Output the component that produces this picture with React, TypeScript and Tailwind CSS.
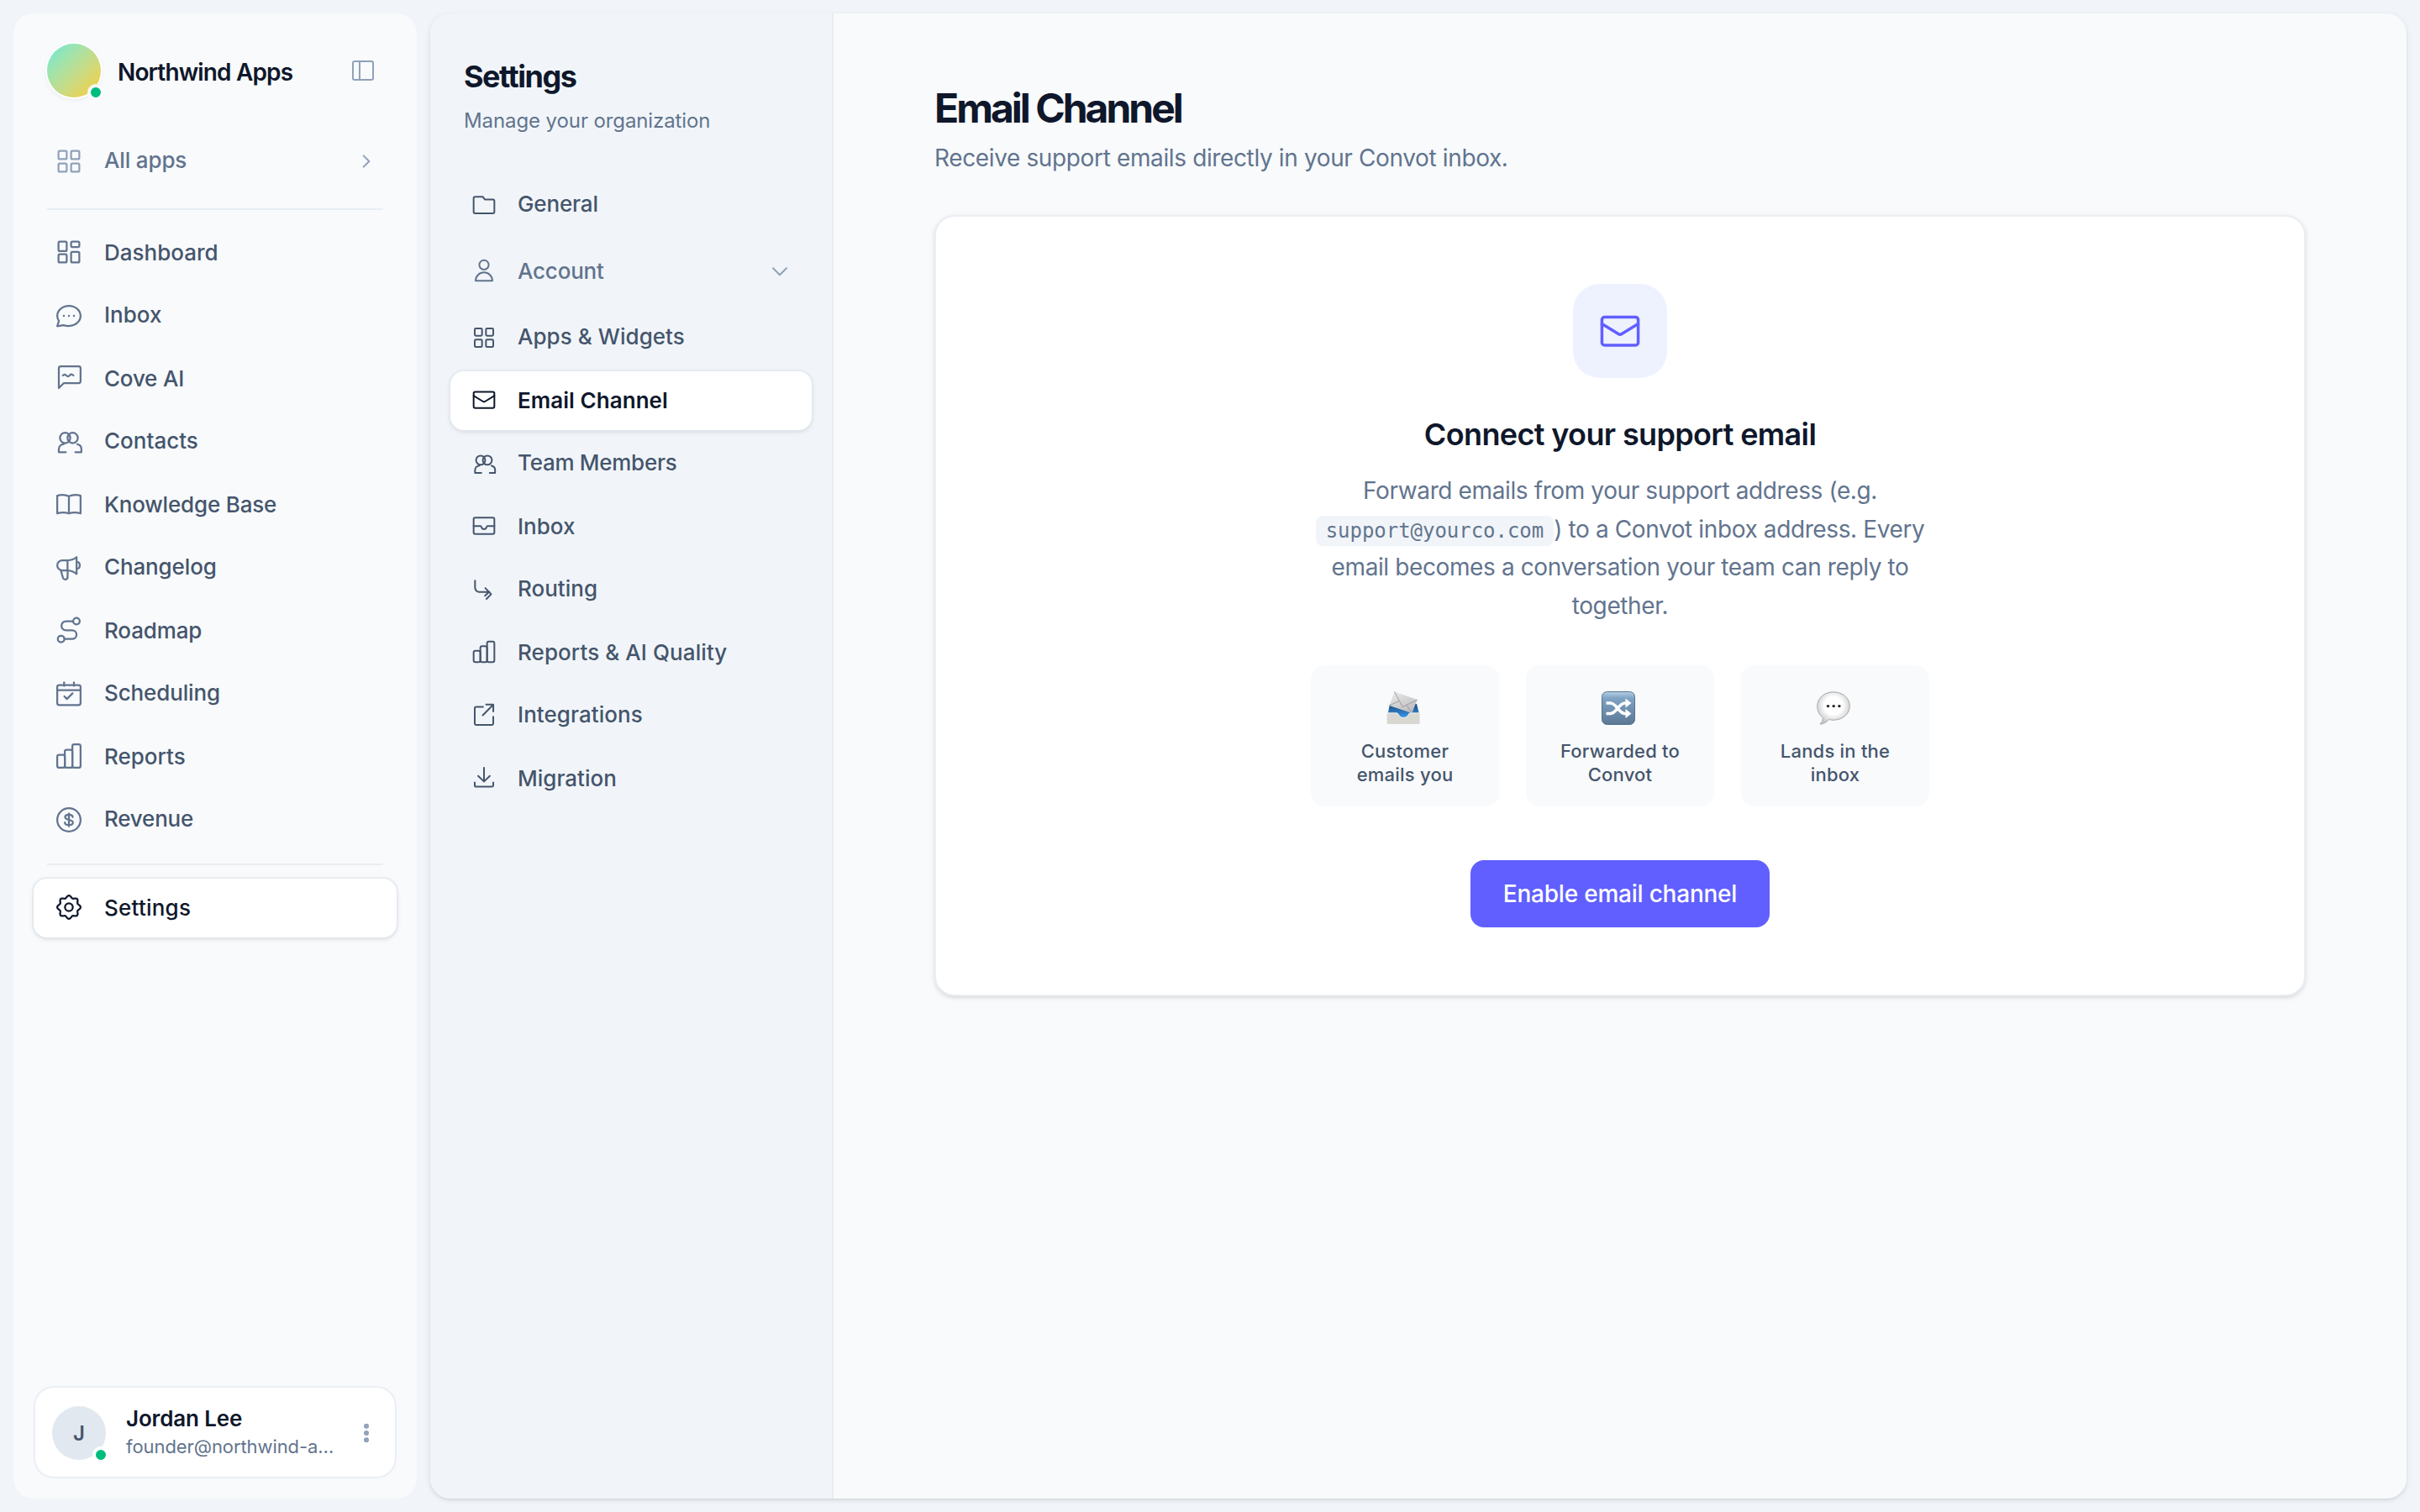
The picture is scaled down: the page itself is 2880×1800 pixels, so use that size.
import type { ReactNode } from "react";
import { clsx } from "clsx";

const gearPath = (() => {
  const points: string[] = [];
  for (let i = 0; i < 120; i++) {
    const a = (i / 120) * Math.PI * 2;
    const r = 8.35 + 0.9 * Math.cos(a * 8);
    points.push(`${(12 + r * Math.sin(a)).toFixed(2)} ${(12 - r * Math.cos(a)).toFixed(2)}`);
  }
  return `M${points.join("L")}Z`;
})();

const icons: Record<string, ReactNode> = {
  grid: (
    <>
      <rect x="3.75" y="3.75" width="6.5" height="6.5" rx="1" />
      <rect x="13.75" y="3.75" width="6.5" height="6.5" rx="1" />
      <rect x="3.75" y="13.75" width="6.5" height="6.5" rx="1" />
      <rect x="13.75" y="13.75" width="6.5" height="6.5" rx="1" />
    </>
  ),
  dashboard: (
    <>
      <rect x="3.75" y="3.75" width="6.5" height="7.5" rx="1" />
      <rect x="13.75" y="3.75" width="6.5" height="4.25" rx="1" />
      <rect x="3.75" y="13.75" width="6.5" height="6.5" rx="1" />
      <rect x="13.75" y="11.9" width="6.5" height="8.35" rx="1" />
    </>
  ),
  chat: (
    <>
      <path d="M12 20c5.1 0 9.25-3.6 9.25-8S17.1 4 12 4 2.75 7.6 2.75 12c0 1.5.5 2.9 1.3 4.1L2.75 20.2l4.9-.8c1.3.4 2.8.6 4.35.6Z" />
      <path strokeWidth="1.6" d="M8 12h.01M12 12h.01M16 12h.01" />
    </>
  ),
  cove: (
    <>
      <path d="M4 20V4.25a1.5 1.5 0 0 1 1.5-1.5h14.25a1.5 1.5 0 0 1 1.5 1.5V14.5a1.5 1.5 0 0 1-1.5 1.5H8l-4 4Z" />
      <path d="M7.2 10c.8-.9 1.6-1 2.4-.3s1.5 1.6 2.4.8 1.1-1.4 1.9-1.4 1.2.4 1.7.9" />
    </>
  ),
  people: (
    <>
      <circle cx="9" cy="8.9" r="4.1" />
      <circle cx="15" cy="8.9" r="4.1" />
      <path d="M8 13.7c-2.3.2-4 1.9-4 4.2v2.3h5.6M18.7 13.9c1.9.4 3.2 1.9 3.2 3.9v2.4h-4.8" />
    </>
  ),
  book: (
    <path d="M2.75 5.4c2.9-.9 6.5-.8 9.25.5 2.75-1.3 6.35-1.4 9.25-.5v14.1c-2.9-.9-6.5-.9-9.25 0-2.75-.9-6.35-.9-9.25 0V5.4ZM12 5.9v13.6" />
  ),
  megaphone: (
    <path d="M10.9 6.1H6.7a3.95 3.95 0 0 0 0 7.9h4.2m0-7.9V14m0-7.9c3.2-.1 5.3-.9 7.2-2.6v13.4c-1.9-1.7-4-2.7-7.2-2.9m-5.3.2 1.7 5.7a1.9 1.9 0 0 0 3.7-.5V14m7.2-6.9a3 3 0 0 1 0 5.9" />
  ),
  route: (
    <>
      <circle cx="18" cy="5" r="2.6" />
      <circle cx="5.8" cy="19.1" r="2.6" />
      <path d="M15.3 5H9.7a3.6 3.6 0 0 0 0 7.2h4.9a3.45 3.45 0 0 1 0 6.9H8.5" />
    </>
  ),
  calendar: (
    <>
      <rect x="2.75" y="5" width="18.5" height="15.9" rx="1.5" />
      <path d="M2.75 9.1h18.5M8.2 2.9v2.8M16 2.9v2.8M8.4 14l2 2.1 4.5-4.5" />
    </>
  ),
  bars: (
    <>
      <rect x="2.75" y="11" width="6" height="10.25" rx="1.5" />
      <rect x="8.75" y="7" width="6" height="14.25" rx="1.5" />
      <rect x="14.75" y="2.75" width="6.5" height="18.5" rx="1.5" />
    </>
  ),
  dollar: (
    <>
      <circle cx="12" cy="12" r="9.25" />
      <path d="M15 9.9c0-1.3-1.3-2-3-2s-3 .7-3 2c0 2.9 6.2 1.3 6.2 4.2 0 1.3-1.4 2-3.2 2s-3.2-.7-3.2-2M12 6.9v10.3" />
    </>
  ),
  gear: (
    <>
      <path d={gearPath} />
      <circle cx="12" cy="12" r="3.1" />
    </>
  ),
  panel: (
    <>
      <rect x="3" y="3.75" width="18" height="16.5" rx="1.5" />
      <path d="M9 3.75v16.5" />
    </>
  ),
  chevronRight: <path d="m9.5 7 5 5-5 5" />,
  chevronDown: <path d="m6 9.2 6 6 6-6" />,
  folder: (
    <path d="M2.75 6A1.25 1.25 0 0 1 4 4.75h7l1.9 2.4H20a1.25 1.25 0 0 1 1.25 1.25v9.8A1.25 1.25 0 0 1 20 19.45H4a1.25 1.25 0 0 1-1.25-1.25V6Z" />
  ),
  user: (
    <>
      <circle cx="12" cy="7" r="4.2" />
      <path d="M4.5 21.25a7.5 7.5 0 0 1 15 0h-15Z" />
    </>
  ),
  mail: (
    <>
      <rect x="2.75" y="4.9" width="18.5" height="14.35" rx="1.4" />
      <path d="m2.75 8.4 8.4 5.1a1.6 1.6 0 0 0 1.7 0l8.4-5.1" />
    </>
  ),
  tray: (
    <>
      <rect x="2.75" y="4.75" width="18.5" height="14.5" rx="1.4" />
      <path d="M2.75 12.2h6.1c.5 0 .7.3.8.7.3 1.1 1 2.1 2.35 2.1s2.05-1 2.35-2.1c.1-.4.3-.7.8-.7h6.1" />
    </>
  ),
  routing: (
    <path d="M4 4v6.2A3.8 3.8 0 0 0 7.8 14h9.1M13.2 10.6l5.2 5.4-4.2 4.3M12.9 17.4l3.6-3.4" />
  ),
  external: (
    <path d="M11.2 4.2H5a1.25 1.25 0 0 0-1.25 1.25V19A1.25 1.25 0 0 0 5 20.25h14A1.25 1.25 0 0 0 20.25 19v-6M13.9 2h6.4v6.2M20 2.4l-9.1 9.2" />
  ),
  download: (
    <path d="M12 3v12.3M6.8 10.3l5.2 5 5.2-5M3.75 16.2v2.5a1.25 1.25 0 0 0 1.25 1.25h14a1.25 1.25 0 0 0 1.25-1.25v-2.5" />
  ),
  dots: (
    <>
      <circle cx="12" cy="5.8" r="1.25" strokeWidth="2" />
      <circle cx="12" cy="12" r="1.25" strokeWidth="2" />
      <circle cx="12" cy="18.2" r="1.25" strokeWidth="2" />
    </>
  ),
};

const Icon = ({ name, className }: { name: string; className: string }) => (
  <svg
    viewBox="0 0 24 24"
    fill="none"
    stroke="currentColor"
    strokeWidth="1.5"
    strokeLinecap="round"
    strokeLinejoin="round"
    className={clsx("shrink-0", className)}
  >
    {icons[name]}
  </svg>
);

const sidebarItems = [
  { icon: "dashboard", label: "Dashboard", track: "" },
  { icon: "chat", label: "Inbox", track: "" },
  { icon: "cove", label: "Cove AI", track: "tracking-[-0.2px]" },
  { icon: "people", label: "Contacts", track: "" },
  { icon: "book", label: "Knowledge Base", track: "tracking-[-0.18px]" },
  { icon: "megaphone", label: "Changelog", track: "tracking-[-0.13px]" },
  { icon: "route", label: "Roadmap", track: "tracking-[-0.15px]" },
  { icon: "calendar", label: "Scheduling", track: "tracking-[-0.13px]" },
  { icon: "bars", label: "Reports", track: "" },
  { icon: "dollar", label: "Revenue", track: "tracking-[-0.21px]" },
];

const settingsItems = [
  { icon: "folder", label: "General", track: "tracking-[-0.15px]" },
  { icon: "user", label: "Account", track: "tracking-[-0.2px]", expandable: true },
  { icon: "grid", label: "Apps & Widgets", track: "tracking-[0.05px]" },
  { icon: "mail", label: "Email Channel", track: "tracking-[0.05px]", active: true },
  { icon: "people", label: "Team Members", track: "tracking-[-0.28px]" },
  { icon: "tray", label: "Inbox", track: "" },
  { icon: "routing", label: "Routing", track: "" },
  { icon: "bars", label: "Reports & AI Quality", track: "tracking-[0.08px]" },
  { icon: "external", label: "Integrations", track: "tracking-[0.05px]" },
  { icon: "download", label: "Migration", track: "" },
];

const OnlineDot = ({ className }: { className: string }) => (
  <span className={clsx("absolute -right-1 -bottom-1 size-5 rounded-full border-4 bg-[#00bc7d]", className)} />
);

const Sidebar = () => (
  <aside className="flex w-[480px] shrink-0 flex-col rounded-3xl bg-slate-50 px-6 pt-9 pb-6">
    <div className="flex items-center pr-6 pl-4">
      <div className="relative size-16 rounded-full bg-linear-to-br from-[#5eead4] to-[#facc15] shadow-[0_0_0_2px_#fff,0_2px_6px_rgba(0,0,0,0.1)]">
        <OnlineDot className="border-slate-50" />
      </div>
      <span className="ml-5 pt-1 text-[28px] leading-[42px] font-semibold tracking-[-0.86px] text-slate-900">
        Northwind Apps
      </span>
      <Icon name="panel" className="ml-auto size-8 text-slate-400" />
    </div>

    <div className="mt-[41px] flex h-[70px] items-center gap-6 pr-5 pl-6 text-slate-500">
      <Icon name="grid" className="size-9 text-slate-400" />
      <span className="pb-1 text-[26px] leading-[39px] font-medium tracking-[-0.15px]">All apps</span>
      <Icon name="chevronRight" className="ml-auto size-8 text-slate-400" />
    </div>

    <div className="mx-4 mt-[21px] h-0.5 bg-slate-200/70" />

    <nav className="mt-4 flex flex-col gap-[5px]">
      {sidebarItems.map((item) => (
        <a key={item.label} className="group flex h-[70px] items-center gap-6 px-6 text-slate-600">
          <Icon name={item.icon} className="size-9 text-slate-500 group-odd:-mt-0.5" />
          <span
            className={clsx(
              "text-[26px] leading-[39px] font-medium group-odd:pb-0.5 group-even:pb-1",
              item.track
            )}
          >
            {item.label}
          </span>
        </a>
      ))}
    </nav>

    <div className="mx-4 mt-[17px] h-0.5 bg-slate-200/70" />

    <a className="mt-4 flex h-[70px] items-center gap-6 rounded-2xl bg-white px-6 text-slate-900 shadow-[0_0_0_2px_rgba(226,232,240,0.7),0_2px_6px_rgba(0,0,0,0.1),0_2px_4px_-2px_rgba(0,0,0,0.1)]">
      <Icon name="gear" className="-mt-0.5 size-9" />
      <span className="pb-0.5 text-[26px] leading-[39px] font-medium tracking-[0.23px]">Settings</span>
    </a>

    <div className="mt-auto flex h-[110px] items-center rounded-3xl border-2 border-slate-200/70 bg-white px-5">
      <div className="relative mt-0.5 flex size-16 items-center justify-center rounded-full bg-slate-200 pt-0.5 text-2xl font-semibold text-slate-600">
        J
        <OnlineDot className="border-white" />
      </div>
      <div className="ml-6 flex flex-col pb-0.5">
        <span className="text-[26px] leading-9 font-semibold tracking-[-0.15px] text-slate-900">Jordan Lee</span>
        <span className="text-[22px] leading-[30px] tracking-[-0.08px] text-slate-500">founder@northwind-a…</span>
      </div>
      <Icon name="dots" className="mt-0.5 -mr-0.5 ml-auto size-8 text-slate-400" />
    </div>
  </aside>
);

const SettingsNav = () => (
  <div className="flex w-[480px] shrink-0 flex-col border-r-2 border-slate-200/70 bg-slate-100 px-6 pt-[50px]">
    <h2 className="px-4 text-4xl leading-[50px] font-bold tracking-[-1.48px] text-slate-900">Settings</h2>
    <p className="mt-2.5 px-4 text-2xl leading-9 tracking-[-0.1px] text-slate-500">Manage your organization</p>

    <nav className="mt-[47px] flex flex-col gap-[5px]">
      {settingsItems.map((item) => (
        <a
          key={item.label}
          className={clsx(
            "group flex items-center gap-6 rounded-2xl pr-[22px] pl-6",
            item.expandable ? "h-[78px] text-slate-500" : "h-[70px]",
            item.active
              ? "bg-white font-semibold text-slate-900 shadow-[0_0_0_2px_rgba(226,232,240,0.7),0_2px_6px_rgba(0,0,0,0.1),0_2px_4px_-2px_rgba(0,0,0,0.1)]"
              : "font-medium",
            !item.active && !item.expandable && "text-slate-600"
          )}
        >
          <Icon name={item.icon} className="size-8 group-even:-mt-0.5" />
          <span className={clsx("text-[26px] leading-[39px] group-odd:pb-1 group-even:pb-0.5", item.track)}>
            {item.label}
          </span>
          {item.expandable && <Icon name="chevronDown" className="ml-auto size-8 text-slate-400" />}
        </a>
      ))}
    </nav>
  </div>
);

const IncomingEnvelope = () => (
  <svg viewBox="0 0 40 40" className="mr-1 size-10">
    <defs>
      <linearGradient id="paper" x1="0" y1="0" x2="0.6" y2="1">
        <stop offset="0" stopColor="#ededed" />
        <stop offset="1" stopColor="#bdbdbf" />
      </linearGradient>
      <linearGradient id="trayInside" x1="0" y1="0" x2="0" y2="1">
        <stop offset="0" stopColor="#1c4a7c" />
        <stop offset="1" stopColor="#3ba0f5" />
      </linearGradient>
    </defs>
    <path d="M4 15h32l2.5 10-4 8h-28l-4.5-8L4 15Z" fill="url(#trayInside)" />
    <path d="M9.4.3 36.7 10 30.3 26 3.5 17 9.4.3Z" fill="url(#paper)" />
    <path d="M9.4.3 19.2 18.6 36.7 10M3.5 17l11.5-5.5M30.3 26l-6-9.4" fill="none" stroke="#97989c" strokeWidth="0.9" />
    <path d="M.6 25.6h11.2c1.2 0 2 .6 2.7 1.8C15.8 30 17.5 31 20.2 31s4.6-1 5.9-3.6c.6-1.2 1.4-1.8 2.6-1.8h10.9V38a1 1 0 0 1-1 1H1.6a1 1 0 0 1-1-1V25.6Z" fill="#d9d7d1" />
    <path d="M.6 26h11.2c1.2 0 2 .6 2.7 1.8 1.3 2.6 3 3.6 5.7 3.6s4.6-1 5.9-3.6c.6-1.2 1.4-1.8 2.6-1.8h10.9" fill="none" stroke="#f4f3f0" strokeWidth="0.9" />
  </svg>
);

const Shuffle = () => (
  <svg viewBox="0 0 40 40" className="mr-1 size-10">
    <defs>
      <linearGradient id="shuffleBg" x1="0" y1="0" x2="0" y2="1">
        <stop offset="0" stopColor="#b4cfe4" />
        <stop offset="0.2" stopColor="#7fa3c4" />
        <stop offset="1" stopColor="#5b7894" />
      </linearGradient>
    </defs>
    <rect x="0.5" y="0.5" width="39" height="39" rx="6" fill="url(#shuffleBg)" stroke="#54718e" />
    <path d="M5.5 14h5c7.5 0 9.5 12.5 17.5 12.5h1M5.5 26.5h5c7.5 0 9.5-12.5 17.5-12.5h1" fill="none" stroke="#fff" strokeWidth="3.6" />
    <path d="M28.5 8.5 35.5 14l-7 5.5v-11ZM28.5 21l7 5.500-7 5.500V21Z" fill="#fff" />
  </svg>
);

const SpeechBalloon = () => (
  <svg viewBox="0 0 40 40" className="mr-1 size-10">
    <defs>
      <radialGradient id="balloon" cx="0.5" cy="0.42" r="0.56">
        <stop offset="0.5" stopColor="#ffffff" />
        <stop offset="1" stopColor="#c9c9c9" />
      </radialGradient>
    </defs>
    <path
      d="M20 .8c10.8 0 19.3 7.3 19.3 16.7S30.8 34.2 20 34.2c-1.900 0-3.700-.2-5.400-.6-2.200 2.700-5.600 4.900-9.800 5.600-.6.1-.8-.5-.4-.9 2.200-1.800 3-4 2.900-6.900C3.200 28.300.7 23.200.7 17.500.7 8.100 9.200.8 20 .8Z"
      fill="url(#balloon)"
      stroke="#a8a8a8"
    />
    <circle cx="13.5" cy="17.6" r="1.7" fill="#222" />
    <circle cx="20.2" cy="17.6" r="1.7" fill="#222" />
    <circle cx="26.9" cy="17.6" r="1.7" fill="#222" />
  </svg>
);

const steps = [
  { emoji: <IncomingEnvelope />, lines: ["Customer", "emails you"] },
  { emoji: <Shuffle />, lines: ["Forwarded to", "Convot"] },
  { emoji: <SpeechBalloon />, lines: ["Lands in the", "inbox"] },
];

const EmailChannel = () => (
  <main className="flex-1 bg-slate-50 px-[120px] pt-[83px]">
    <h1 className="text-5xl leading-[60px] font-bold tracking-[-3px] text-slate-900">Email Channel</h1>
    <p className="mt-2 text-[28px] leading-[42px] tracking-[-0.37px] text-slate-500">
      Receive support emails directly in your Convot inbox.
    </p>

    <section className="mt-[47px] flex h-[930px] flex-col items-center rounded-3xl border-2 border-slate-200/70 bg-white pt-20 shadow-[0_2px_6px_rgba(0,0,0,0.1),0_2px_4px_-2px_rgba(0,0,0,0.1)]">
      <div className="flex size-28 items-center justify-center rounded-4xl bg-indigo-50">
        <Icon name="mail" className="size-14 text-[#615fff]" />
      </div>
      <h2 className="mt-[39px] text-4xl leading-[56px] font-semibold tracking-[-0.64px] text-slate-900">
        Connect your support email
      </h2>
      <p className="mt-[17px] w-[736px] text-center text-[28px] leading-[45.5px] tracking-[-0.39px] text-slate-500">
        Forward emails from your support address (e.g.{" "}
        <code className="inline-block rounded-lg bg-slate-100 px-3 py-1 font-['DejaVu_Sans_Mono',monospace] text-2xl leading-7 tracking-[-0.03px]">
          support@yourco.com
        </code>
        ) to a Convot inbox address. Every email becomes a conversation your team can reply to together.
      </p>

      <div className="mt-12 flex gap-8">
        {steps.map((step) => (
          <div key={step.lines[0]} className="flex h-[168px] w-56 flex-col items-center rounded-2xl bg-slate-50 pt-[31px]">
            {step.emoji}
            <p className="mt-[17px] text-center text-[22px] leading-7 font-medium tracking-[0.22px] text-slate-600">
              {step.lines[0]}
              <br />
              {step.lines[1]}
            </p>
          </div>
        ))}
      </div>

      <button className="mt-16 h-20 w-[356px] rounded-2xl bg-[#615fff] text-[28px] font-medium tracking-[-0.22px] text-white">
        Enable email channel
      </button>
    </section>
  </main>
);

export default function App() {
  return (
    <div className="flex h-[1800px] w-[2880px] gap-4 bg-slate-100 p-4 font-['Inter',sans-serif]">
      <Sidebar />
      <div className="flex flex-1 overflow-hidden rounded-3xl shadow-[0_2px_6px_rgba(0,0,0,0.1),0_2px_4px_-2px_rgba(0,0,0,0.1)]">
        <SettingsNav />
        <EmailChannel />
      </div>
    </div>
  );
}
